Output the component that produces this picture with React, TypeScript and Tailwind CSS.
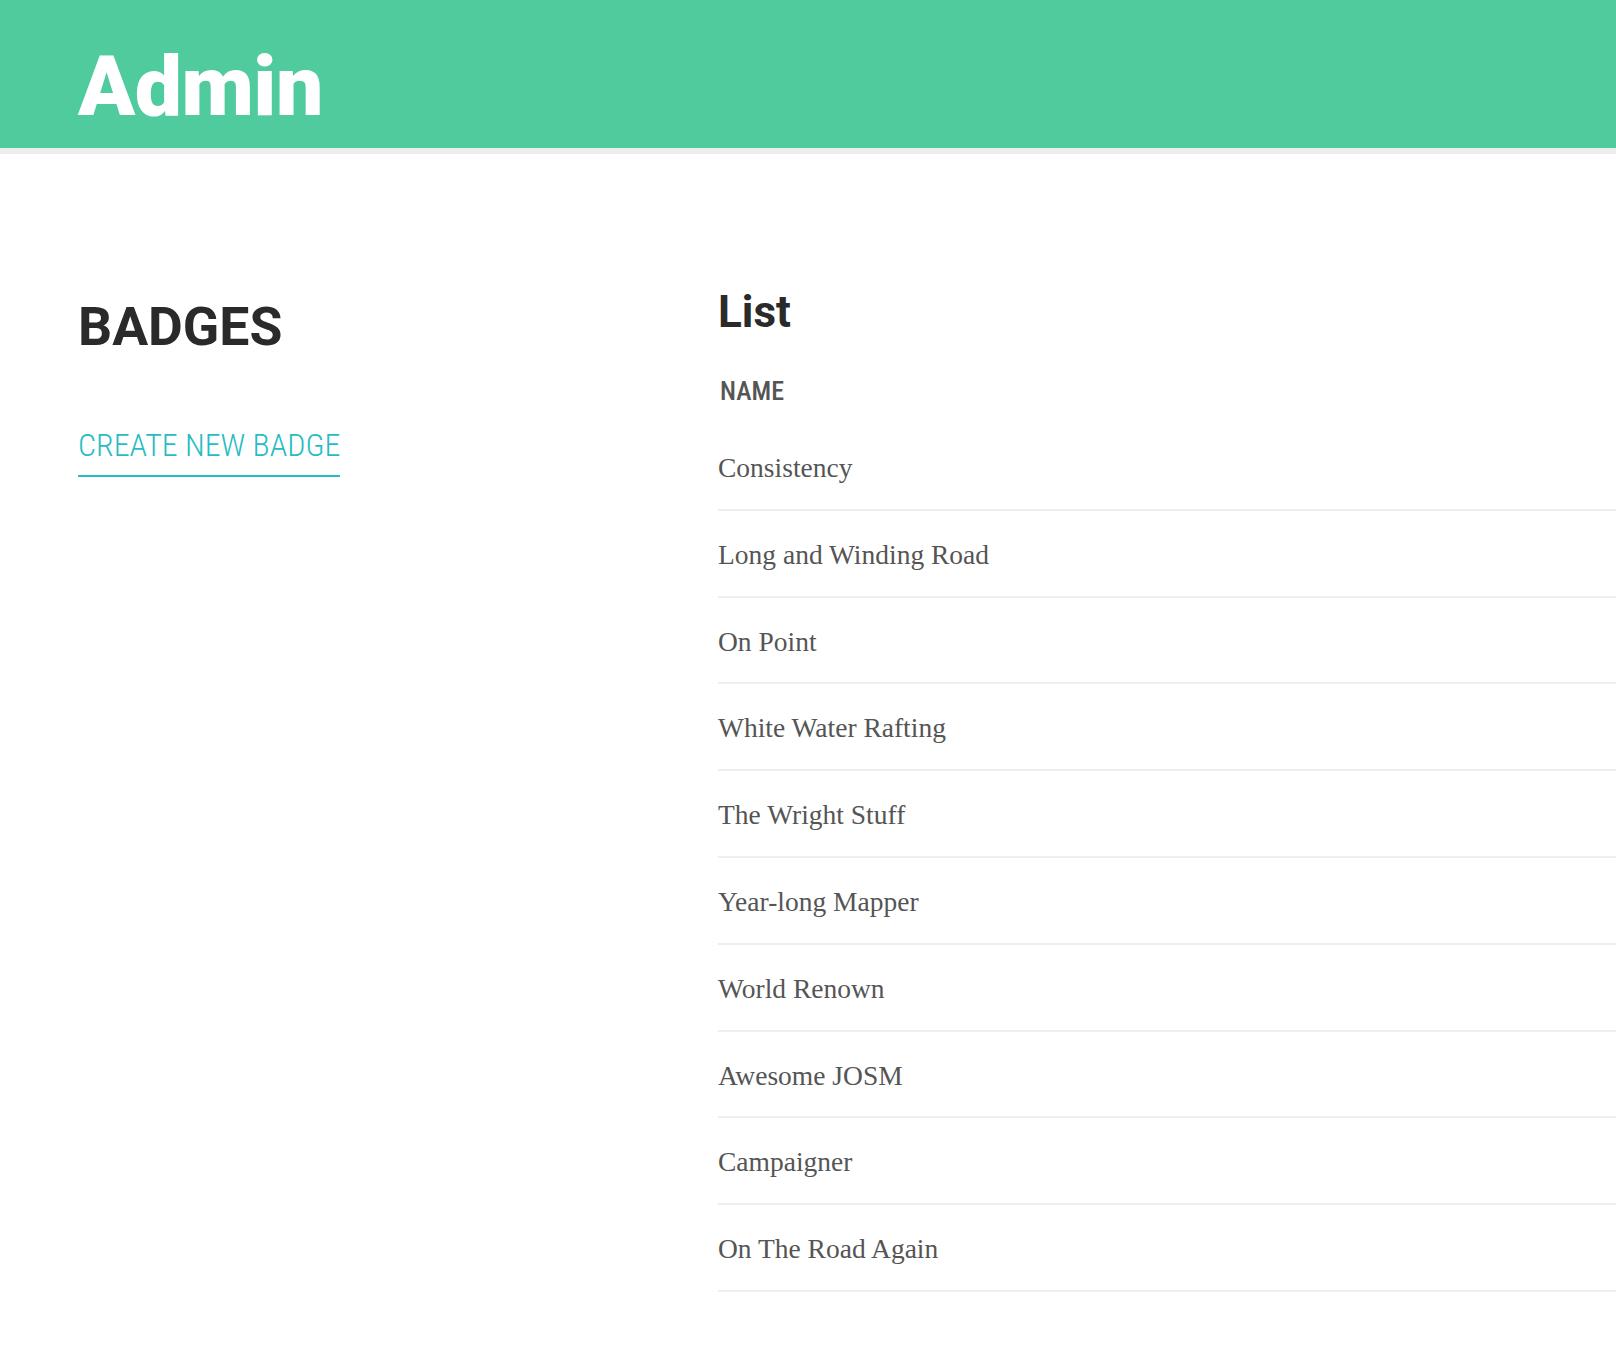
import React from "react";

const rows = [
  "Consistency",
  "Long and Winding Road",
  "On Point",
  "White Water Rafting",
  "The Wright Stuff",
  "Year-long Mapper",
  "World Renown",
  "Awesome JOSM",
  "Campaigner",
  "On The Road Again",
];

export default function App() {
  return (
    <div className="min-h-[1352px] bg-white font-['Roboto',_sans-serif]">
      <header className="h-[154px] bg-[#50cb9e] border-b-[6px] border-[#ededed] pl-[78px] pt-[45px]">
        <h1 className="text-[84px] leading-none font-black text-white font-stretch-[88%] tracking-[-0.5px]">Admin</h1>
      </header>
      <main className="flex pl-[78px]">
        <aside className="w-[640px] shrink-0 pt-[146px]">
          <h2 className="text-[53.5px] leading-none font-bold text-[#2a2a2a]">BADGES</h2>
          <div className="mt-[75px]">
            <a
              href="#"
              className="inline-block text-[32px] leading-none font-light text-[#26bcc3] border-b-2 border-[#26bcc3] pb-[14px] font-stretch-condensed"
            >
              CREATE NEW BADGE
            </a>
          </div>
        </aside>
        <section className="flex-1 pt-[136px]">
          <h2 className="text-[44px] leading-none font-bold text-[#2a2a2a]">List</h2>
          <div className="mt-[44px] pl-[2px] text-[26px] leading-none font-medium text-[#555] font-stretch-condensed">NAME</div>
          <ul className="mt-[20px]">
            {rows.map((r) => (
              <li
                key={r}
                className="h-[86.8px] border-b-2 border-[#eeeeee] pt-[29px] text-[27.5px] leading-[30px] text-[#555] font-['Liberation_Serif',_serif]"
              >
                {r}
              </li>
            ))}
          </ul>
        </section>
      </main>
    </div>
  );
}
